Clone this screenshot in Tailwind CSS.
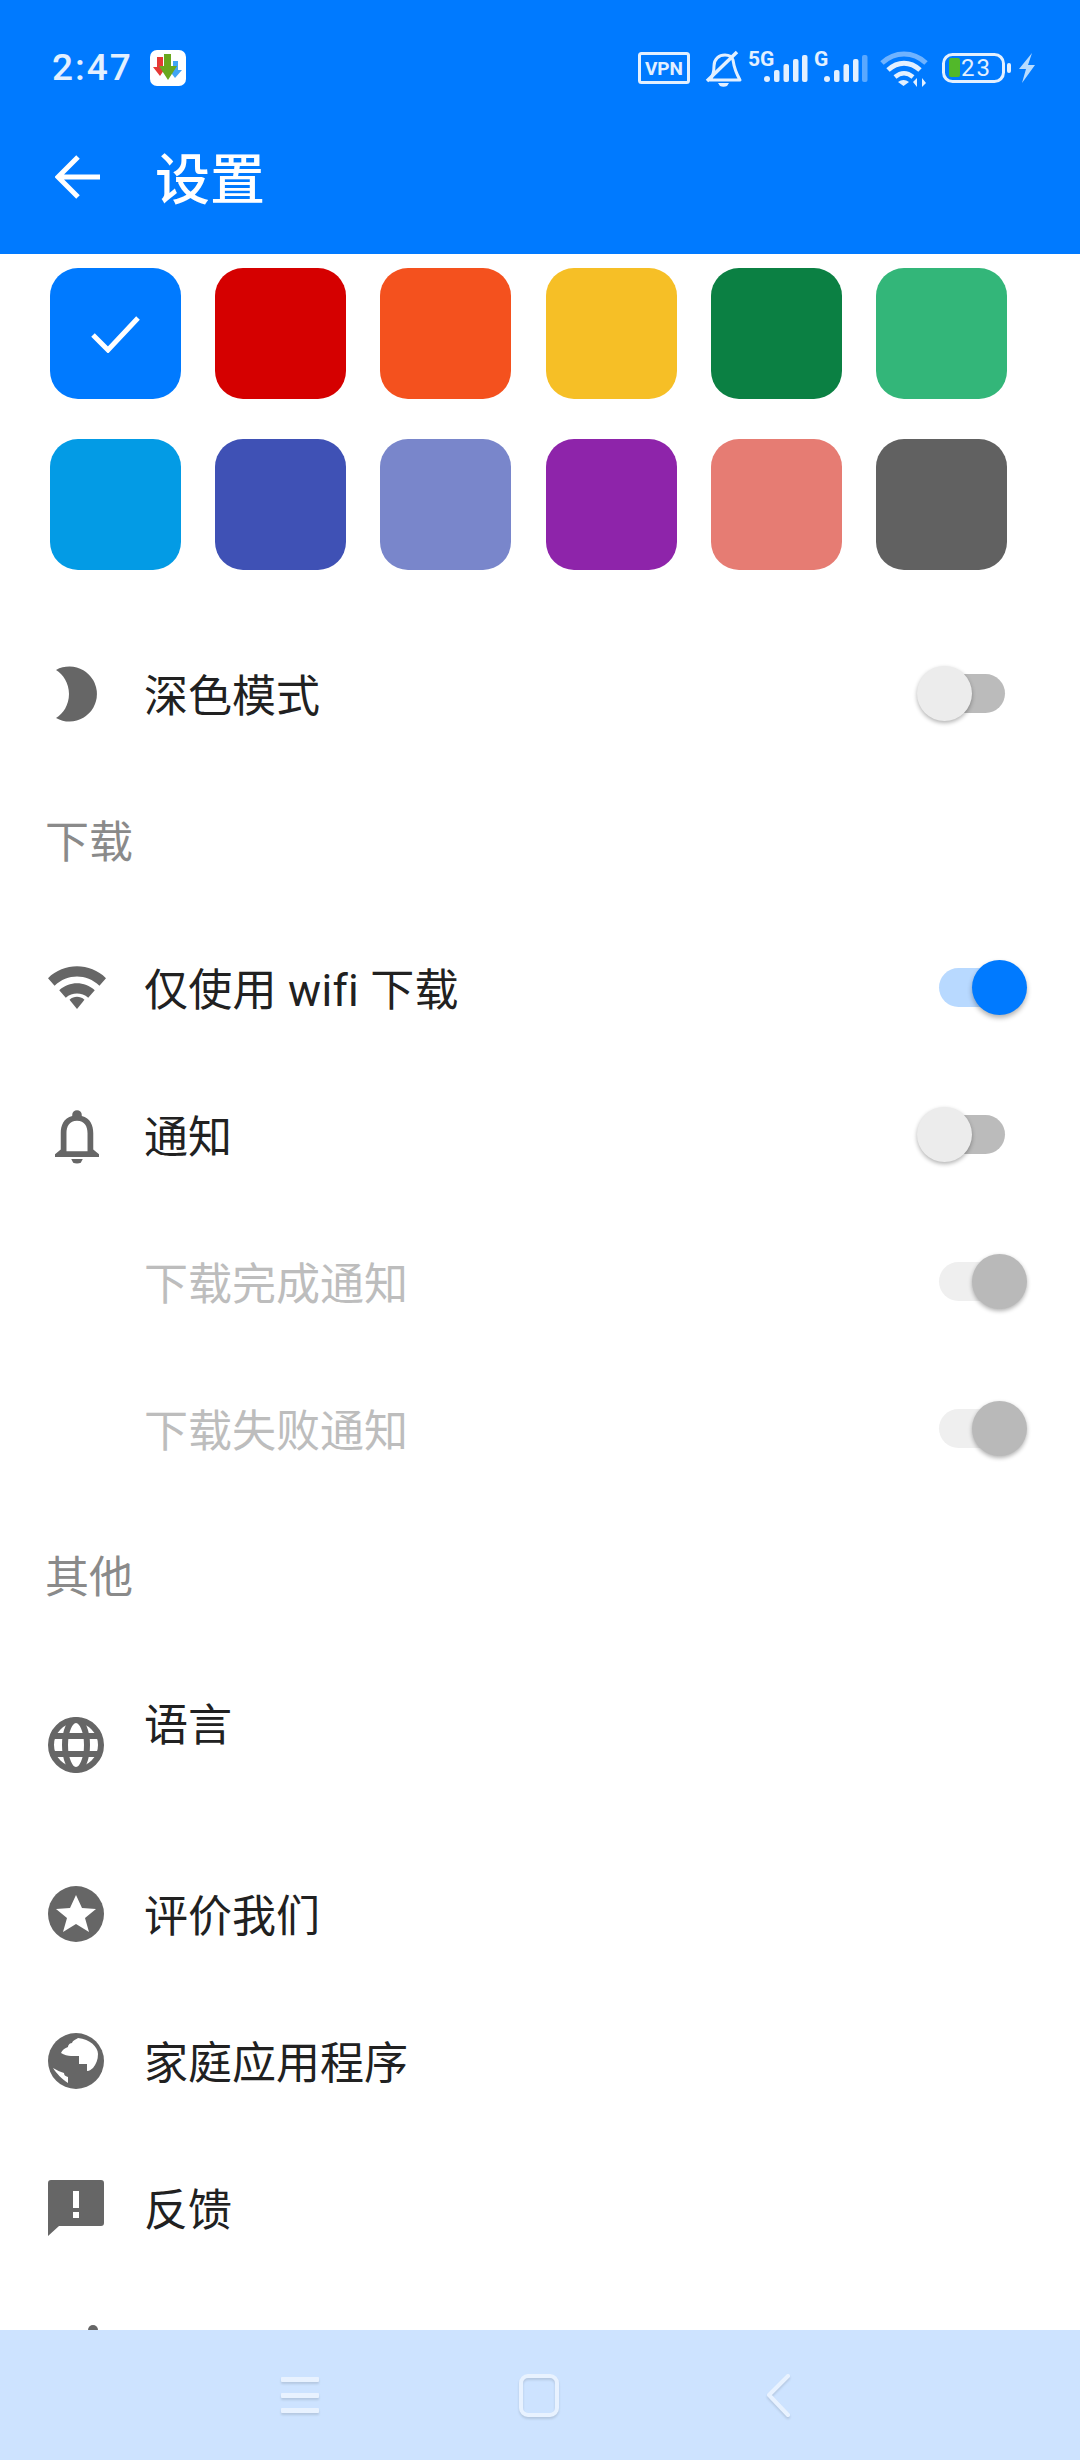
<!DOCTYPE html>
<html lang="zh">
<head>
    <meta charset="UTF-8">
    <meta name="viewport" content="width=device-width, initial-scale=1.0">
    <title>设置</title>
    <script src="https://cdn.jsdelivr.net/npm/@tailwindcss/browser@4"></script>
</head>
<body class="bg-white font-['Roboto','Noto_Sans_CJK_SC',sans-serif]">
    <div class="w-[1080px] h-[2460px] flex flex-col overflow-hidden">

        <!-- Status bar + app bar -->
        <header class="h-[254px] shrink-0 bg-[#007aff] text-white">
            <div class="h-[134px] pl-[52px] pr-[44px] pt-[44px] flex items-start justify-between">
                <div class="flex items-center gap-[17px] h-[36px] mt-[6px]">
                    <span class="text-[37px] leading-[36px] tracking-[2px] font-medium text-[#e3f0ff]">2:47</span>
                    <svg class="w-[36px] h-[36px]" viewBox="0 0 36 36">
                        <rect width="36" height="36" rx="7" fill="#fff"/>
                        <path d="M7 7h6v10h3l-6 9-7-9h4z" fill="#e53935"/>
                        <path d="M23 11h5v9h4l-7 8-6-8h4z" fill="#42a5f5"/>
                        <path d="M14 4h7v12h6l-9 14-9-14h5z" fill="#6aa81e"/>
                    </svg>
                </div>
                <div class="flex items-start h-[46px]">
                    <svg class="w-[398px] h-[46px]" viewBox="0 -6 398 46" fill="#e3f0ff" font-family="Roboto">
                        <rect x="1.500" y="3.500" width="49" height="29" rx="2" fill="none" stroke="#e3f0ff" stroke-width="3"/>
                        <text x="26" y="25" font-size="19" font-weight="700" text-anchor="middle">VPN</text>
                        <!-- muted bell -->
                        <path d="M72 30c3-4 4-9 4-14 0-7 5-11 11-11 4 0 7 2 8 5 1 7 3 13 7 20z" fill="none" stroke="#e3f0ff" stroke-width="3" stroke-linejoin="round"/>
                        <path d="M69 31 99 2" stroke="#e3f0ff" stroke-width="3.500"/>
                        <path d="M80 33h11l-2 3c-2 1-5 1-7 0z"/>
                        <!-- 5G signal -->
                        <text x="110" y="16" font-size="21" font-weight="700">5G</text>
                        <rect x="126" y="26" width="6" height="6" rx="3"/><rect x="136" y="20" width="5.500" height="12" rx="2"/><rect x="145.500" y="14" width="5.500" height="18" rx="2"/><rect x="155" y="9" width="5.500" height="23" rx="2"/><rect x="164" y="5" width="5.500" height="27" rx="2"/>
                        <!-- G signal -->
                        <text x="176" y="16" font-size="21" font-weight="700">G</text>
                        <rect x="186" y="26" width="6" height="6" rx="3"/><rect x="196" y="20" width="5.500" height="12" rx="2"/><rect x="205.500" y="14" width="5.500" height="18" rx="2"/><rect x="215" y="9" width="5.500" height="23" rx="2"/>
                        <rect x="224" y="5" width="5.500" height="27" rx="2" fill="#5aa8ff"/>
                        <!-- wifi -->
                        <path d="M244 13c13-12 31-12 44 0" fill="none" stroke="#6fb3ff" stroke-width="5"/>
                        <path d="M250 20c10-9 22-9 32 0" fill="none" stroke="#e3f0ff" stroke-width="5"/>
                        <path d="M257 27c6-5 12-5 18 0" fill="none" stroke="#e3f0ff" stroke-width="4.500"/>
                        <path d="M260 32a9 9 0 0 1 11 0l-5.500 4z"/>
                        <path d="M279 37v-9l-4 4zM284 28v9l4-4z"/>
                        <!-- battery -->
                        <rect x="305.500" y="4.500" width="60" height="27" rx="9" fill="none" stroke="#e3f0ff" stroke-width="3"/>
                        <rect x="311" y="8" width="11" height="19" rx="2" fill="#52b82a"/>
                        <text x="323" y="26" font-size="24" letter-spacing="2">23</text>
                        <rect x="369" y="13" width="4" height="10" rx="2"/>
                        <path d="M394 3 381 19h7l-4 14 13-18h-7l4-12z" fill="#b8dcff"/>
                    </svg>
                </div>
            </div>
            <div class="h-[120px] flex items-start">
                <svg class="w-[45px] h-[44px] ml-[55px] mt-[21px]" viewBox="0 0 45 44" fill="none" stroke="#fff" stroke-width="5">
                    <path d="M45 22H4M23 2 3 22l20 20"/>
                </svg>
                <h1 class="ml-[55px] mt-[11px] text-[55px] leading-[70px] font-medium">设置</h1>
            </div>
        </header>

        <main class="flex-1 overflow-hidden text-[#212121] text-[44px] [font-variant-ligatures:none]">
            <!-- Theme colours -->
            <div class="pt-[14px] pl-[50px] grid grid-cols-[repeat(6,131px)] gap-x-[34.2px] gap-y-[40px]">
                <div class="h-[131px] rounded-[28px] bg-[#007aff] flex items-center justify-center">
                    <svg class="w-[50px] h-[38px]" viewBox="0 0 50 38" fill="none" stroke="#fff" stroke-width="5"><path d="M2 20l15 15L47 3"/></svg>
                </div>
                <div class="h-[131px] rounded-[28px] bg-[#d50000]"></div>
                <div class="h-[131px] rounded-[28px] bg-[#f4511e]"></div>
                <div class="h-[131px] rounded-[28px] bg-[#f6bf26]"></div>
                <div class="h-[131px] rounded-[28px] bg-[#0b8043]"></div>
                <div class="h-[131px] rounded-[28px] bg-[#33b679]"></div>
                <div class="h-[131px] rounded-[28px] bg-[#039be5]"></div>
                <div class="h-[131px] rounded-[28px] bg-[#3f51b5]"></div>
                <div class="h-[131px] rounded-[28px] bg-[#7986cb]"></div>
                <div class="h-[131px] rounded-[28px] bg-[#8e24aa]"></div>
                <div class="h-[131px] rounded-[28px] bg-[#e67c73]"></div>
                <div class="h-[131px] rounded-[28px] bg-[#616161]"></div>
            </div>

            <!-- Dark mode -->
            <div class="mt-[50px] h-[147px] flex items-center">
                <svg class="w-[42px] h-[56px] ml-[55px]" viewBox="0 0 42 56" fill="#666"><path d="M1 4A27.500 27.500 0 1 1 1 52C8 48 14 39 14 28S8 8 1 4z"/></svg>
                <span class="ml-[47px] pt-[6px] flex-1">深色模式</span>
                <div class="relative w-[66px] h-[39px] mr-[75px] rounded-full bg-[#bbb]">
                    <div class="absolute left-[-22px] top-[-8px] w-[55px] h-[55px] rounded-full bg-[#ececec] shadow-[0_2px_4px_rgba(0,0,0,0.3)]"></div>
                </div>
            </div>

            <h2 class="pl-[45px] pt-[3px] h-[147px] leading-[147px] text-[#8a8a8a]">下载</h2>

            <div class="h-[147px] flex items-center">
                <svg class="w-[60px] h-[43px] ml-[47px]" viewBox="0 0 62 46" fill="#666"><path d="M0 13C17-4 45-4 62 13l-7 8C41 8 21 8 7 21z"/><path d="M12 26c11-10 27-10 38 0l-7 8c-7-6-17-6-24 0z"/><path d="M23 36c5-4 11-4 16 0l-8 10z"/></svg>
                <span class="ml-[37px] pt-[6px] flex-1 tracking-[0.3px]">仅使用 wifi 下载</span>
                <div class="relative w-[66px] h-[39px] mr-[75px] rounded-full bg-[#b8d9ff]">
                    <div class="absolute left-[33px] top-[-8px] w-[55px] h-[55px] rounded-full bg-[#007aff] shadow-[0_3px_5px_rgba(0,0,0,0.3)]"></div>
                </div>
            </div>
            <div class="h-[147px] flex items-center">
                <svg class="w-[44px] h-[56px] ml-[55px] mt-[4px]" viewBox="0 0 46 56" fill="#666"><path fill-rule="evenodd" d="M23 0a5 5 0 0 1 5 5v1c9 2 12 10 12 18v17l6 5v3H0v-3l6-5V24c0-8 3-16 12-18V5a5 5 0 0 1 5-5zm0 11c-8 0-11 6-11 13v19h22V24c0-7-3-13-11-13z"/><path d="M17 51h12l-2 4c-2 1-6 1-8 0z"/></svg>
                <span class="ml-[45px] pt-[6px] flex-1">通知</span>
                <div class="relative w-[66px] h-[39px] mr-[75px] rounded-full bg-[#bbb]">
                    <div class="absolute left-[-22px] top-[-8px] w-[55px] h-[55px] rounded-full bg-[#ececec] shadow-[0_2px_4px_rgba(0,0,0,0.3)]"></div>
                </div>
            </div>
            <div class="h-[147px] flex items-center text-[#bdbdbd]">
                <span class="ml-[144px] pt-[6px] flex-1">下载完成通知</span>
                <div class="relative w-[66px] h-[39px] mr-[75px] rounded-full bg-[#efefef]">
                    <div class="absolute left-[33px] top-[-8px] w-[55px] h-[55px] rounded-full bg-[#b9b9b9] shadow-[0_2px_4px_rgba(0,0,0,0.3)]"></div>
                </div>
            </div>
            <div class="h-[147px] flex items-center text-[#bdbdbd]">
                <span class="ml-[144px] pt-[6px] flex-1">下载失败通知</span>
                <div class="relative w-[66px] h-[39px] mr-[75px] rounded-full bg-[#efefef]">
                    <div class="absolute left-[33px] top-[-8px] w-[55px] h-[55px] rounded-full bg-[#b9b9b9] shadow-[0_2px_4px_rgba(0,0,0,0.3)]"></div>
                </div>
            </div>

            <h2 class="pl-[45px] pt-[3px] h-[147px] leading-[147px] text-[#8a8a8a]">其他</h2>

            <!-- Language: title sits high, subtitle is empty -->
            <div class="h-[191px] flex items-center">
                <svg class="w-[56px] h-[56px] ml-[48px]" viewBox="0 0 56 56" fill="none" stroke="#666" stroke-width="6"><circle cx="28" cy="28" r="25"/><ellipse cx="28" cy="28" rx="11" ry="25"/><path d="M4 19h48M4 37h48"/></svg>
                <span class="ml-[40px] pt-[6px] flex-1 -mt-[44px]">语言</span>
            </div>
            <div class="h-[147px] flex items-center">
                <svg class="w-[56px] h-[56px] ml-[48px]" viewBox="0 0 56 56"><circle cx="28" cy="28" r="28" fill="#666"/><path d="M28 9l6 13 14 1-11 9 4 14-13-8-13 8 4-14L8 23l14-1z" fill="#fff"/></svg>
                <span class="ml-[40px] pt-[6px] flex-1">评价我们</span>
            </div>
            <div class="h-[147px] flex items-center">
                <svg class="w-[56px] h-[56px] ml-[48px]" viewBox="0 0 56 56"><circle cx="28" cy="28" r="28" fill="#666"/><path d="M30 5c-3 2-5 2-6 5-3 0-4 3-4 4-3 1-6 3-7 6 3 2 7 3 10 3h8v8h8v7c3 0 4-2 6-3 3-4 5-8 5-14 0-7-8-15-20-16zM5 35c4 6 8 10 15 15v-6c-3-1-4-2-4-4-4-1-7-3-11-5z" fill="#fff"/></svg>
                <span class="ml-[40px] pt-[6px] flex-1">家庭应用程序</span>
            </div>
            <div class="h-[147px] flex items-center">
                <svg class="w-[56px] h-[56px] ml-[48px]" viewBox="0 0 56 56" fill="#666"><path fill-rule="evenodd" d="M3 0h50a3 3 0 0 1 3 3v40a3 3 0 0 1-3 3H11L0 56V3a3 3 0 0 1 3-3zm22 11v17h6V11zm0 21v6h6v-6z"/></svg>
                <span class="ml-[40px] pt-[6px] flex-1">反馈</span>
            </div>
            <div class="h-[147px] flex items-center">
                <svg class="w-[46px] h-[56px] ml-[70px] -mt-[4px]" viewBox="0 0 46 56" fill="#666"><path d="M23 0a5 5 0 0 1 5 5v12h-10V5a5 5 0 0 1 5-5z"/></svg>
            </div>
        </main>

        <!-- Navigation bar -->
        <nav class="h-[130px] shrink-0 bg-[#cde3ff] flex items-start">
            <svg class="w-[38px] h-[40px] ml-[281px] mt-[47px] drop-shadow-[0_2px_1px_rgba(0,0,0,0.12)]" viewBox="0 0 38 40" fill="#e8f2ff">
                <rect y="0" width="38" height="5" rx="1"/><rect y="16" width="38" height="5" rx="1"/><rect y="31" width="38" height="5" rx="1"/>
            </svg>
            <svg class="w-[40px] h-[44px] ml-[200px] mt-[44px] drop-shadow-[0_2px_1px_rgba(0,0,0,0.12)]" viewBox="0 0 40 44" fill="none" stroke="#e8f2ff" stroke-width="4"><rect x="2" y="2" width="36" height="39" rx="7"/></svg>
            <svg class="w-[26px] h-[44px] ml-[206px] mt-[44px] drop-shadow-[0_2px_1px_rgba(0,0,0,0.12)]" viewBox="0 0 26 44" fill="none" stroke="#e8f2ff" stroke-width="4" stroke-linecap="round" stroke-linejoin="round"><path d="M23 2 4 21l19 20"/></svg>
        </nav>
    </div>
</body>
</html>
